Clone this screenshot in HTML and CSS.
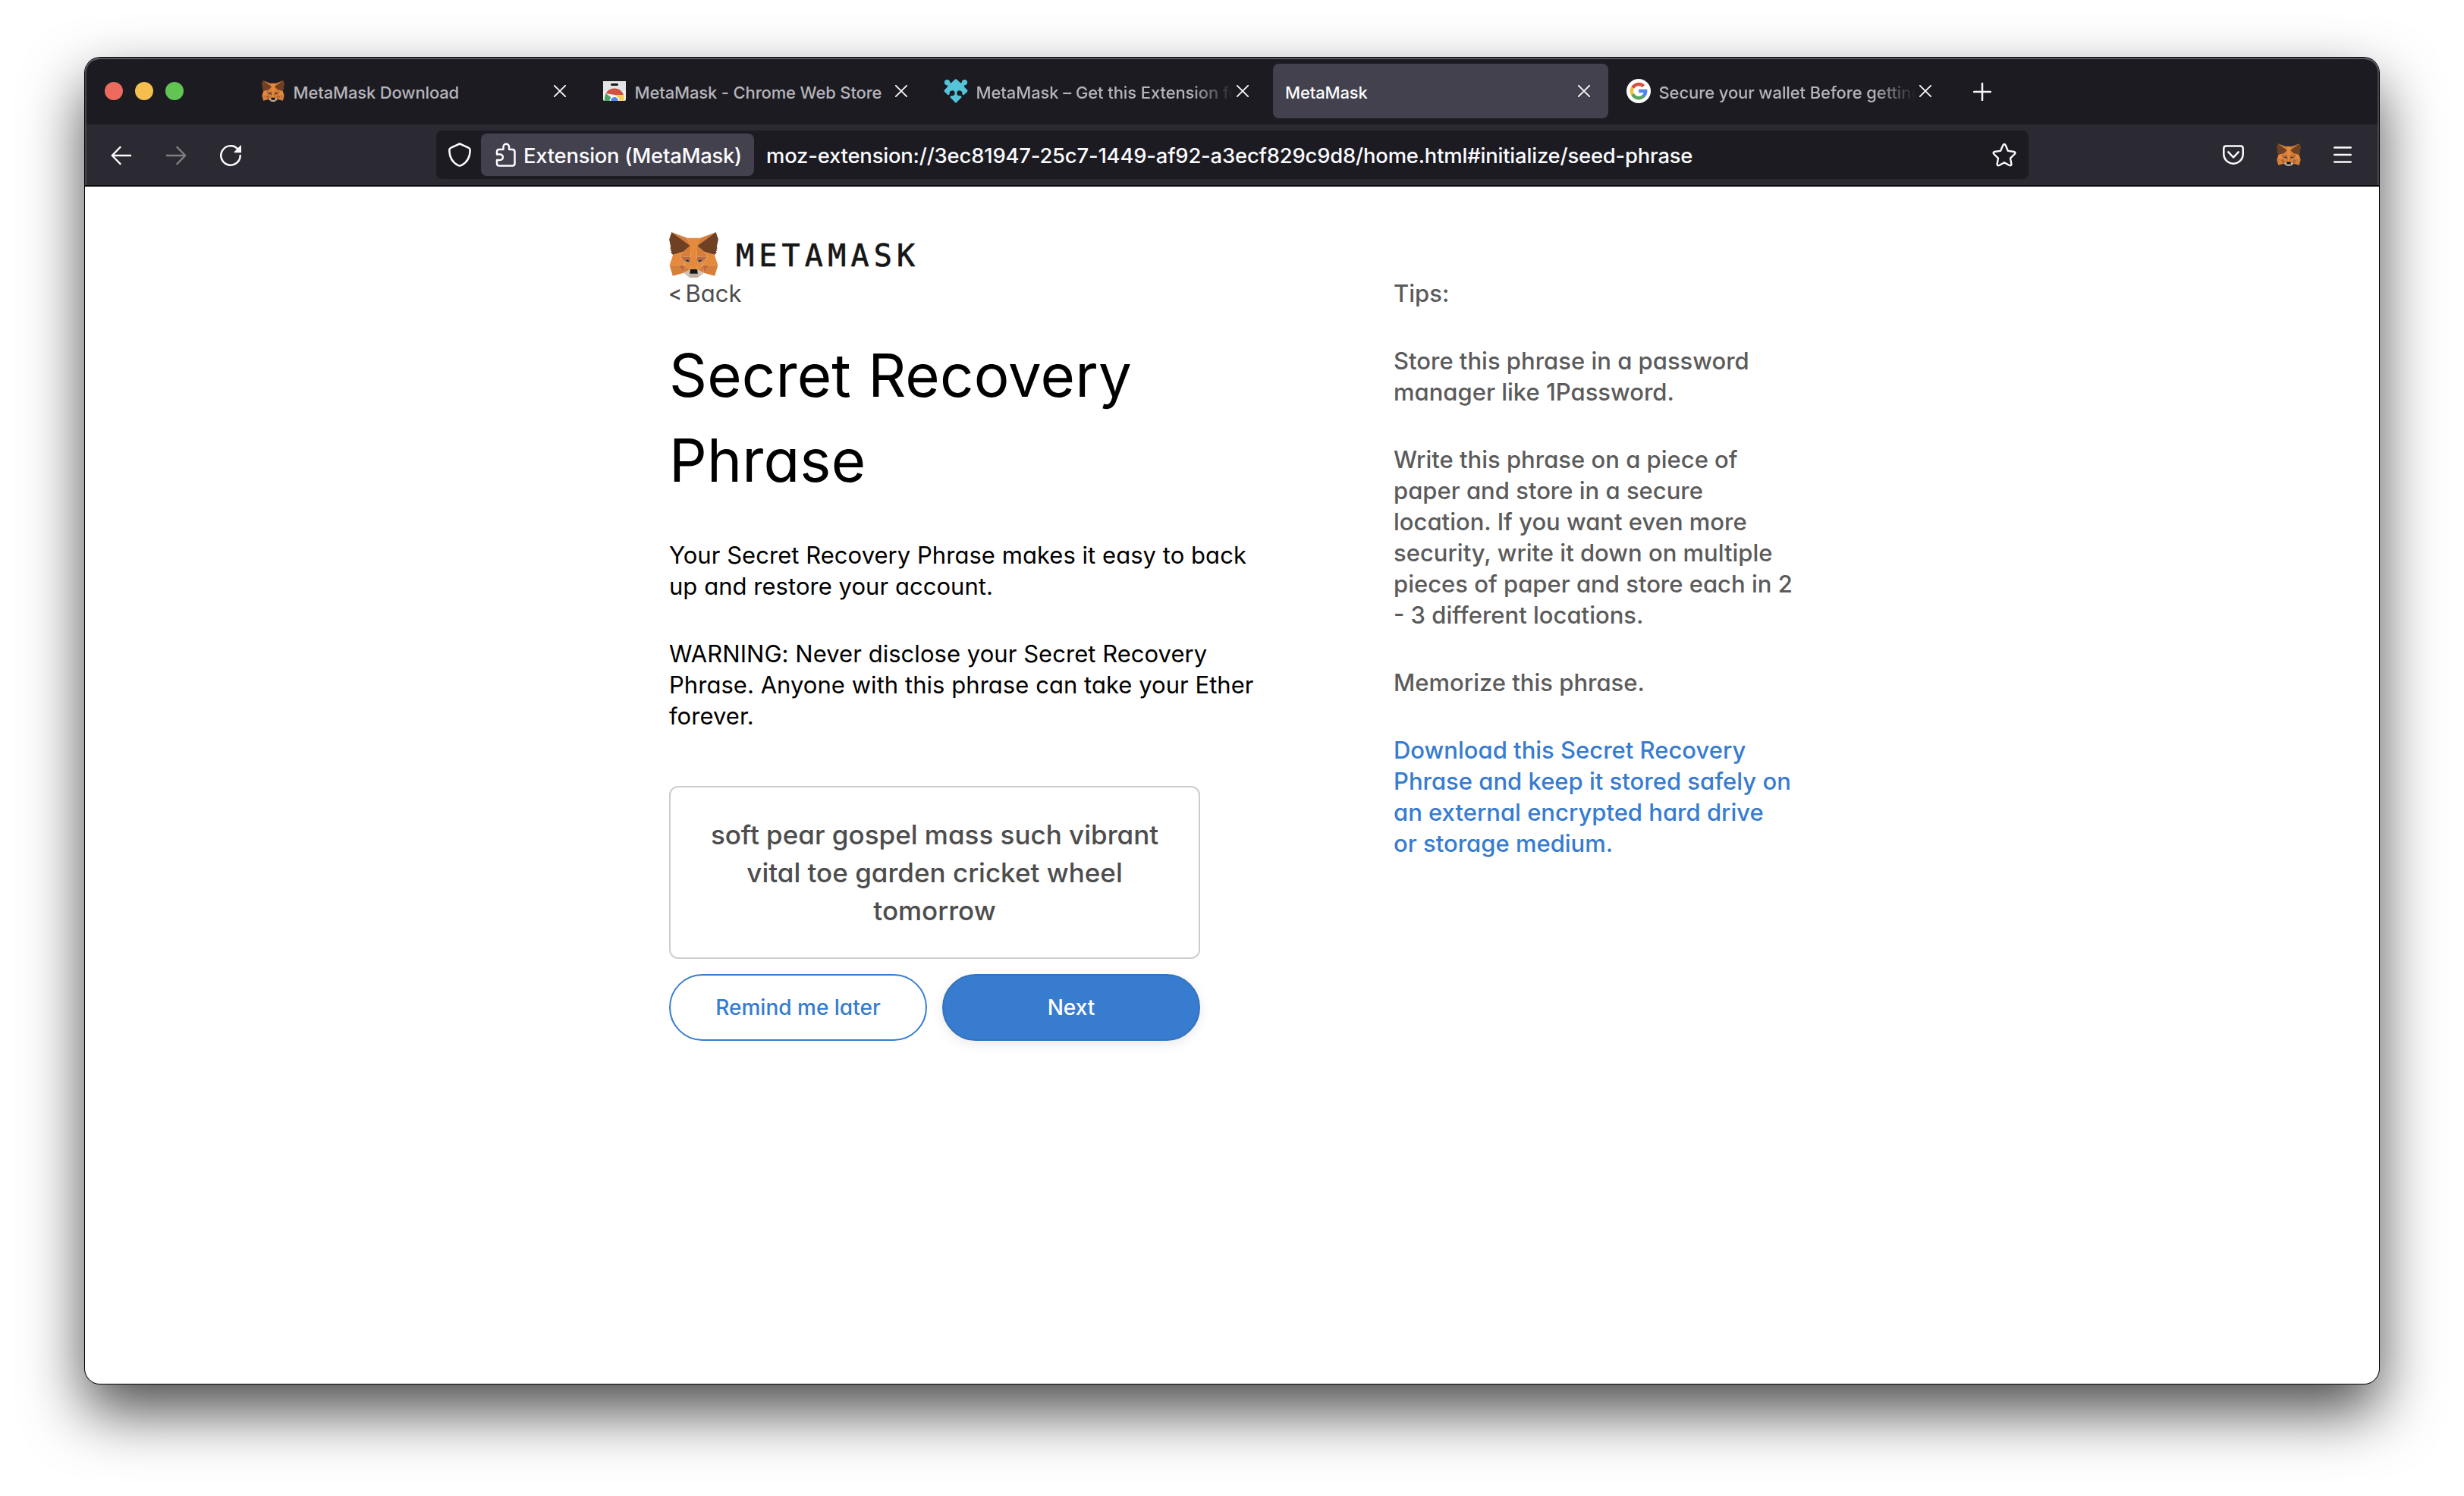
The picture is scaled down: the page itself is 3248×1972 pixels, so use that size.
FILE: index.html
```html
<!DOCTYPE html>
<html lang="en">
<head>
<meta charset="utf-8">
<title>MetaMask</title>
<link rel="stylesheet" href="styles.css">
</head>
<body>
<svg class="sprite" aria-hidden="true">
  <symbol id="fox" viewBox="31.8 35.5 255 236.4">
    <path class="fox-cheek" d="M274.1 35.5l-99.5 73.9L193 65.8zM44.4 35.5l98.7 74.6-17.5-44.3zM238.3 206.8l-26.5 40.6 56.7 15.6 16.3-55.3zM33.9 207.7L50.1 263l56.7-15.6-26.5-40.6zM103.6 138.2l-15.8 23.9 56.3 2.5-2-60.5zM214.9 138.2l-39-34.8-1.3 61.2 56.2-2.5zM106.8 247.4l33.8-16.5-29.2-22.8zM177.9 230.9l33.9 16.5-4.7-39.3z"/>
    <path class="fox-jaw" d="M211.8 247.4l-33.9-16.5 2.7 22.1-.3 9.3zM106.8 247.4l31.5 14.9-.2-9.3 2.5-22.1z"/>
    <path class="fox-shade" d="M106.8 247.4l4.8-40.6-31.3.9zM207 206.8l4.8 40.6 26.5-39.7zM230.8 162.1l-56.2 2.5 5.2 28.9 8.3-17.4 20 9.1zM110.6 185.2l20-9.1 8.2 17.4 5.3-28.9-56.3-2.5z"/>
    <path class="fox-eye" d="M138.8 193.5l-28.2-8.3 19.9-9.1zM179.7 193.5l8.3-17.4 20 9.1z"/>
    <path class="fox-cheek" d="M87.8 162.1l23.6 46-.8-22.9zM208.1 185.2l-1 22.9 23.7-46zM144.1 164.6l-5.3 28.9 6.6 34.1 1.5-44.9zM174.6 164.6l-2.7 18 1.2 45 6.7-34.1z"/>
    <path class="fox-main" d="M179.8 193.5l-6.7 34.1 4.8 3.3 29.2-22.8 1-22.9zM110.6 185.2l.8 22.9 29.2 22.8 4.8-3.3-6.6-34.1z"/>
    <path class="fox-chin" d="M180.3 262.3l.3-9.3-2.5-2.2h-37.7l-2.3 2.2.2 9.3-31.5-14.9 11 9 22.3 15.5h38.3l22.4-15.5 11-9z"/>
    <path class="fox-nose" d="M177.9 230.9l-4.8-3.3h-27.7l-4.8 3.3-2.5 22.1 2.3-2.2h37.7l2.5 2.2z"/>
    <path class="fox-ear" d="M278.3 114.2l8.5-40.8-12.7-37.9-96.2 71.4 37 31.3 52.3 15.3 11.6-13.5-5-3.6 8-7.3-6.2-4.8 8-6.1zM31.8 73.4l8.5 40.8-5.4 4 8 6.1-6.1 4.8 8 7.3-5 3.6 11.5 13.5 52.3-15.3 37-31.3-96.2-71.4z"/>
    <path class="fox-main" d="M267.2 153.5l-52.3-15.3 15.9 23.9-23.7 46 31.2-.4h46.5zM103.6 138.2l-52.3 15.3-17.4 54.2h46.4l31.1.4-23.6-46zM174.6 164.6l3.3-57.7 15.2-41.1h-67.5l15 41.1 3.5 57.7 1.2 18.2.1 44.8h27.7l.2-44.8z"/>
  </symbol>
  <symbol id="close" viewBox="0 0 16 16"><path d="M.8.8l14.4 14.4M15.2.8L.8 15.2" fill="none" stroke="#fbfbfe" stroke-width="1.8" stroke-linecap="round"/></symbol>
</svg>

<div class="window">
  <header class="chrome">
    <div class="tabbar">
      <div class="lights"><i class="light red"></i><i class="light yellow"></i><i class="light green"></i></div>
      <div class="tabs">
        <div class="tab">
          <span class="favicon"><svg class="fox-small"><use href="#fox"/></svg></span>
          <span class="label">MetaMask Download</span><svg class="close"><use href="#close"/></svg>
        </div>
        <div class="tab">
          <span class="favicon"><svg width="32" height="32" viewBox="0 0 32 32"><path fill="#e4e4e4" d="M1 3h30v13H1z"/><path fill="#f1f1f1" d="M1 16h30v11a2 2 0 0 1-2 2H3a2 2 0 0 1-2-2z"/><rect x="11" y="6" width="10" height="3" rx="1.5" fill="#1c1b22"/><path fill="#cf5140" d="M4.500 19a13 13 0 0 1 23.500 2H16z"/><path fill="#4aa065" d="M4.500 19Q2.500 23 3 29h9l-1-5z"/><path fill="#f5cf5b" d="M17 21h11q1.500 4 .5 8H18z"/><path fill="#fff" d="M9.500 29a6.500 6.500 0 1 1 13 0z"/><path fill="#5585ee" d="M11 29a5 5 0 1 1 10 0z"/></svg></span>
          <span class="label">MetaMask - Chrome Web Store</span><svg class="close"><use href="#close"/></svg>
        </div>
        <div class="tab">
          <span class="favicon"><svg width="32" height="32" viewBox="0 0 32 32" fill="#57c3d7"><path d="M16 .2c1 0 1.700.7 5.500 4.600 1.500 1.200 2.300.6 2.300-.8a3.700 3.700 0 1 1 4.300 4.300c-1.400.3-1.900 1.200-.8 2.400l3.600 3.700c.8.8.8 1.700 0 2.500L27 20.700c-1.300 1-2.400.5-2.700-1.200a3.500 3.500 0 1 0-4.200 2.800c1.900.2 4.500.1 3 2.400L17 30.900c-.7.700-1.300.7-2 0l-6.100-6.200c-1.500-2.300 1.100-2.200 3-2.400a3.500 3.500 0 1 0-4.200-2.800C7.400 21.200 6.300 21.700 5 20.700L1.100 16.900c-.8-.8-.8-1.700 0-2.500l3.600-3.700c1.100-1.200.6-2.100-.8-2.400A3.700 3.700 0 1 1 8.200 4c0 1.400.8 2 2.300.8C14.300.9 15 .2 16 .2z"/></svg></span>
          <span class="label fade">MetaMask – Get this Extension for</span><svg class="close"><use href="#close"/></svg>
        </div>
        <div class="tab active">
          <span class="label">MetaMask</span><svg class="close"><use href="#close"/></svg>
        </div>
        <div class="tab">
          <span class="favicon"><svg width="32" height="32" viewBox="0 0 32 32"><circle cx="16" cy="16" r="16" fill="#fff"/><g fill="none" stroke-width="4.400"><path stroke="#d95040" d="M8.100 11.800A9.200 9.200 0 0 1 22.600 9.600"/><path stroke="#f2be42" d="M8.100 20.600a9.200 9.200 0 0 1 0-9"/><path stroke="#58a55c" d="M22.200 22.900A9.200 9.200 0 0 1 8.100 20.400"/><path stroke="#5086ec" d="M16.200 16h9A9.200 9.200 0 0 1 22 23"/></g></svg></span>
          <span class="label fade">Secure your wallet Before getting</span><svg class="close"><use href="#close"/></svg>
        </div>
      </div>
      <svg class="newtab" width="24" height="24" viewBox="0 0 24 24"><path d="M12 1v22M1 12h22" stroke="#fbfbfe" stroke-width="2.500" stroke-linecap="round"/></svg>
    </div>

    <div class="toolbar">
      <div class="nav">
        <svg width="28" height="28" viewBox="0 0 28 28" fill="none" stroke="#fbfbfe" stroke-width="2.500" stroke-linecap="round" stroke-linejoin="round"><path d="M26 14H2M12.500 3L1.800 14l10.700 11"/></svg>
        <svg class="forward" width="28" height="28" viewBox="0 0 28 28" fill="none" stroke="#fbfbfe" stroke-width="2.500" stroke-linecap="round" stroke-linejoin="round"><path d="M2 14h24M15.500 3l10.700 11-10.700 11"/></svg>
        <svg width="28" height="28" viewBox="0 0 28 28"><path d="M26.700 14A12.700 12.700 0 1 1 23 5" fill="none" stroke="#fbfbfe" stroke-width="2.500" stroke-linecap="round"/><path fill="#fbfbfe" d="M28 .8v9.400H19.200q-1-.4-.3-1.200L27 .7q.7-.5 1 .1z"/></svg>
      </div>
      <div class="urlbar">
        <svg class="shield" width="32" height="32" viewBox="0 0 32 32" fill="none" stroke="#fbfbfe" stroke-width="2.500" stroke-linejoin="round"><path d="M16 1.500l11.800 5.300q1.900 1 1.900 3-.2 14.400-11.400 20.100-2.300 1.200-4.600 0Q2.500 24.200 2.300 9.800q0-2 1.900-3z"/></svg>
        <div class="identity">
          <svg width="28" height="32" viewBox="0 0 28 32" fill="none" stroke="#fbfbfe" stroke-width="2.500" stroke-linejoin="round"><path d="M2 15.500V12q0-3 3-3h5.500V5.500a3.800 3.800 0 0 1 7.600 0V9H22q3.500 0 3.500 3v15.500q0 3-3 3H5q-3 0-3-3V23h4.200a3.700 3.700 0 0 0 0-7.500z"/></svg>
          <span>Extension (MetaMask)</span>
        </div>
        <span class="url">moz-extension://3ec81947-25c7-1449-af92-a3ecf829c9d8/home.html#initialize/seed-phrase</span>
        <svg class="star" width="32" height="32" viewBox="0 0 32 32" fill="none" stroke="#fbfbfe" stroke-width="2.400" stroke-linejoin="round"><path d="M14.400 3.300q1.600-2.600 3.200 0l3.400 7.600 7.700 1.100q2.700.7 1 3l-5.700 5.600 1.400 7.700q0 2.700-2.600 1.700L16 26.300 9.200 30q-2.600 1-2.600-1.700L8 20.600 2.300 15q-1.700-2.300 1-3l7.700-1.100z"/></svg>
      </div>
      <div class="tools">
        <svg width="28" height="26" viewBox="0 0 28 26" fill="none" stroke="#fbfbfe" stroke-width="2.500" stroke-linecap="round" stroke-linejoin="round"><path d="M4.500 1.500h19q3.200 0 3.200 3.200V12a12.700 12.700 0 0 1-25.400 0V4.700q0-3.200 3.200-3.200z"/><path d="M7.300 9.300L14 16.500l6.700-7.200"/></svg>
        <svg class="fox-tool"><use href="#fox"/></svg>
        <svg width="24" height="24" viewBox="0 0 24 24" stroke="#fbfbfe" stroke-width="2.600" stroke-linecap="round"><path d="M1.300 2.500h21.400M1.300 12h21.400M1.300 21.500h21.400"/></svg>
      </div>
    </div>
  </header>

  <main class="page">
    <div class="brand"><svg class="fox-logo"><use href="#fox"/></svg><span class="wordmark">METAMASK</span></div>
    <div class="columns">
      <section class="main">
        <div class="back"><span class="angle">&lt;</span><span>Back</span></div>
        <h1>Secret Recovery<br>Phrase</h1>
        <p>Your Secret Recovery Phrase makes it easy to back<br>up and restore your account.</p>
        <p>WARNING: Never disclose your Secret Recovery<br>Phrase. Anyone with this phrase can take your Ether<br>forever.</p>
        <div class="seed">soft pear gospel mass such vibrant<br>vital toe garden cricket wheel<br>tomorrow</div>
        <div class="buttons">
          <button class="btn">Remind me later</button>
          <button class="btn primary">Next</button>
        </div>
      </section>
      <aside class="tips">
        <p>Tips:</p>
        <p>Store this phrase in a password<br>manager like 1Password.</p>
        <p>Write this phrase on a piece of<br>paper and store in a secure<br>location. If you want even more<br>security, write it down on multiple<br>pieces of paper and store each in 2<br>- 3 different locations.</p>
        <p>Memorize this phrase.</p>
        <p><a class="download">Download this Secret Recovery<br>Phrase and keep it stored safely on<br>an external encrypted hard drive<br>or storage medium.</a></p>
      </aside>
    </div>
  </main>
</div>
</body>
</html>
```
FILE: styles.css
```css
* { box-sizing: border-box; }
body {
  margin: 0;
  height: 1972px;
  padding: 76px 112px 148px;
  background: #fff;
  font-family: Inter, "Liberation Sans", sans-serif;
  font-weight: 450;
  overflow: hidden;
}
svg { display: block; flex: none; }
.sprite { position: absolute; width: 0; height: 0; }

/* Fox mark */
.fox-main { fill: #e58a3a; }
.fox-cheek { fill: #d57f3b; }
.fox-shade { fill: #c0683a; }
.fox-ear { fill: #6f4022; }
.fox-jaw { fill: #d5c2b5; }
.fox-chin { fill: #c0ae9f; }
.fox-eye { fill: #273447; }
.fox-nose { fill: #161616; }
.fox-small { width: 30px; height: 28px; }
.fox-tool { width: 32px; height: 30px; }
.fox-logo { width: 65px; height: 60px; }

.window {
  height: 1748px;
  border-radius: 20px;
  background: #fff;
  box-shadow: 0 0 0 1px #000, 0 36px 80px rgba(0, 0, 0, .71);
}

/* Browser chrome */
.chrome {
  border-radius: 20px 20px 0 0;
  border-bottom: 2px solid #0c0c0f;
  background: linear-gradient(#1c1b22 88px, #2b2a33 88px);
  box-shadow: inset 0 2px 0 #5c5c60, inset 2px 0 0 #48474e, inset -2px 0 0 #48474e;
  color: #fbfbfe;
}
.tabbar { display: flex; align-items: center; height: 88px; padding-left: 26px; }
.lights { display: flex; gap: 16px; width: 190px; }
.light { width: 24px; height: 24px; border-radius: 50%; }
.red { background: #ed6a5e; }
.yellow { background: #f5bf4f; }
.green { background: #61c554; }
.tabs { display: flex; gap: 8px; }
.tab {
  display: flex;
  align-items: center;
  width: 442px;
  height: 72px;
  padding: 0 24px 0 16px;
  border-radius: 8px;
  color: #b5b4ba;
  font-size: 22px;
}
.tab.active { background: #42414d; color: #fbfbfe; }
.favicon { display: flex; align-items: center; justify-content: center; width: 32px; height: 32px; margin-right: 10.5px; }
.label {
  flex: 1;
  min-width: 0;
  margin-right: 4px;
  padding-top: 3px;
  line-height: 32px;
  white-space: nowrap;
  overflow: hidden;
  letter-spacing: -.15px;
}
.fade { letter-spacing: -.1px; mask-image: linear-gradient(to left, transparent, #000 56px); }
.close { width: 16px; height: 16px; }
.newtab { margin: 2px 0 0 31px; }

.toolbar { display: flex; align-items: center; height: 80px; padding: 0 36px 0 34px; }
.nav { display: flex; gap: 44px; width: 429px; padding-top: 2px; }
.forward { opacity: .4; }
.urlbar {
  display: flex;
  align-items: center;
  width: 2099px;
  height: 64px;
  padding: 0 16px 0 15px;
  border-radius: 8px;
  background: #1c1b22;
  font-size: 27.4px;
  letter-spacing: -.18px;
}
.identity {
  display: flex;
  align-items: center;
  gap: 9px;
  width: 360px;
  height: 56px;
  margin: 0 16px 0 12px;
  padding-left: 19px;
  border-radius: 8px;
  background: #42414d;
  letter-spacing: -.25px;
}
.identity span, .url { padding-top: 1px; white-space: nowrap; }
.url { flex: 1; }
.tools { display: flex; align-items: center; gap: 43px; margin-left: auto; }
.tools .fox-ear { fill: #8f5528; }

/* Extension page */
.page { padding: 60px 0 0 770px; font-feature-settings: "cv11"; }
.brand { display: flex; align-items: center; height: 60px; }
.wordmark {
  margin-left: 23px;
  padding-top: 2px;
  color: #161616;
  font: 40px/58px "DejaVu Sans Mono", monospace;
  letter-spacing: 6.2px;
  -webkit-text-stroke: .7px #161616;
}
.columns { display: grid; grid-template-columns: 955px 540px; font-size: 31px; line-height: 41px; letter-spacing: .04px; white-space: nowrap; }
.main { font-weight: 430; }
.back { display: flex; color: #4d4d4d; }
.angle { width: 22.5px; margin-left: -1px; font-size: 27px; font-weight: 500; }
h1 { margin: 32px 0 48px; font-size: 78px; line-height: 112px; font-weight: 420; letter-spacing: .15px; }
p { margin: 0 0 48px; }
.seed {
  display: flex;
  align-items: center;
  justify-content: center;
  width: 700px;
  height: 228px;
  margin-top: 72px;
  border: 2px solid #cdcdcd;
  border-radius: 12px;
  color: #4d4d4d;
  font-size: 35px;
  font-weight: 450;
  line-height: 50px;
  letter-spacing: 0;
  text-align: center;
}
.buttons { display: flex; gap: 20px; margin-top: 20px; }
.btn {
  width: 340px;
  height: 88px;
  padding-bottom: 1px;
  border: 2px solid #377ccf;
  border-radius: 44px;
  background: #fff;
  color: #377ccf;
  font: 450 28px Inter, sans-serif;
  font-feature-settings: "cv11";
}
.btn.primary { border-color: #3472bd; background: #377ccf; color: #fff; box-shadow: 0 4px 16px rgba(0, 0, 0, .09); }
.tips { color: #5b5b5b; letter-spacing: 0; }
.download { color: #377ccf; }
```
